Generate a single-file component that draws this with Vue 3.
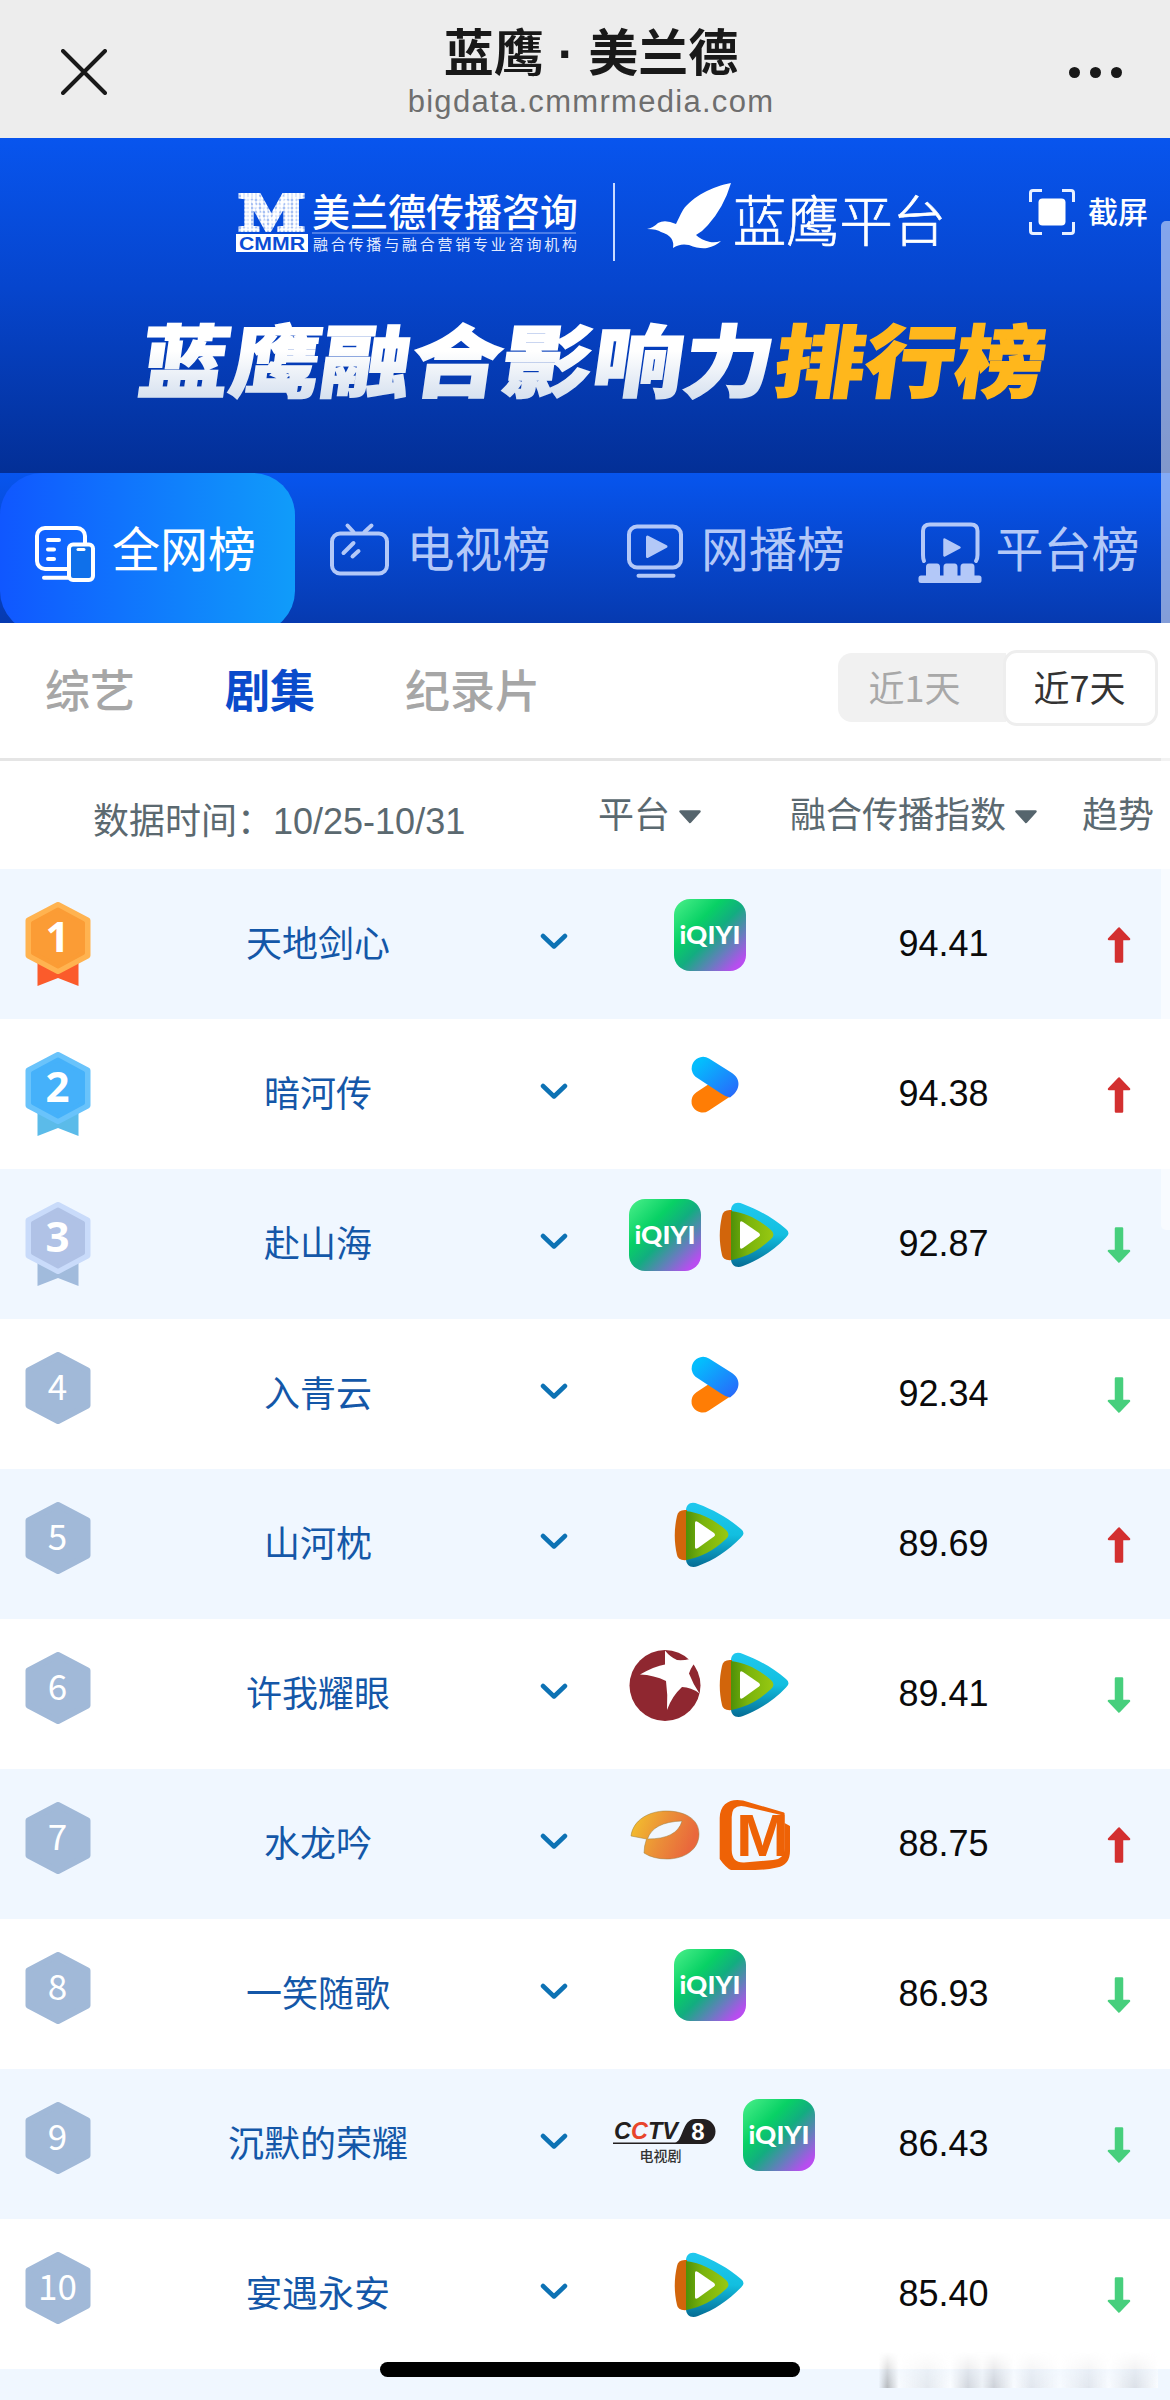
<template>
  <div class="page">

    <!-- Gradientes compartidos -->
    <svg class="sprites" width="0" height="0">
      <defs>
        <linearGradient id="gIqiyi" x1="0" y1="0" x2="1" y2="1">
          <stop offset="0" stop-color="#4cf08a" />
          <stop offset=".33" stop-color="#08d165" />
          <stop offset=".52" stop-color="#12ad80" />
          <stop offset=".73" stop-color="#6a7bc0" />
          <stop offset=".9" stop-color="#b84df0" />
        </linearGradient>
        <linearGradient id="gYouku" x1="0" y1="0" x2="1" y2="1">
          <stop offset=".15" stop-color="#04bdfd" />
          <stop offset="1" stop-color="#2b62fb" />
        </linearGradient>
        <linearGradient id="gCyan" x1="0" y1="0" x2="0" y2="1">
          <stop offset="0" stop-color="#20c8ee" />
          <stop offset=".5" stop-color="#12bfe0" />
          <stop offset="1" stop-color="#056c94" />
        </linearGradient>
        <linearGradient id="gGreen" x1="0" y1="0" x2="1" y2="0">
          <stop offset="0" stop-color="#4e9008" />
          <stop offset=".4" stop-color="#7ab40c" />
          <stop offset="1" stop-color="#98c812" />
        </linearGradient>
        <linearGradient id="gHunan" x1="0" y1="0" x2="1" y2=".3">
          <stop offset="0" stop-color="#f4c62c" />
          <stop offset=".55" stop-color="#eb8f38" />
          <stop offset="1" stop-color="#e9683c" />
        </linearGradient>
        <linearGradient id="gTitle" x1="0" y1="0" x2="0" y2="1">
          <stop offset=".45" stop-color="#ffffff" />
          <stop offset="1" stop-color="#c9d7ea" />
        </linearGradient>
        <pattern id="pDots" width="4" height="4" patternUnits="userSpaceOnUse">
          <rect width="4" height="4" fill="#fff" opacity=".5" />
          <circle cx="2" cy="2" r="1.9" fill="#fff" />
        </pattern>
      </defs>
    </svg>

    <!-- Barra superior -->
    <header class="topbar">
      <svg class="close" width="46" height="46" viewBox="0 0 46 46">
        <path d="M2 2 L44 44 M44 2 L2 44" stroke="#191919" stroke-width="4" stroke-linecap="round" />
      </svg>
      <div class="heading">
        <h1>蓝鹰<span> · </span>美兰德</h1>
        <p>bigdata.cmmrmedia.com</p>
      </div>
      <div class="more"><i></i><i></i><i></i></div>
    </header>

    <!-- Banner -->
    <section class="banner">
      <div class="brands">
        <svg class="cmmr" width="344" height="62" viewBox="0 0 344 62">
          <text x="4" y="38" class="m-dots" textLength="64" lengthAdjust="spacingAndGlyphs">M</text>
          <rect x="0" y="42" width="72" height="18" fill="#fff" />
          <text x="3" y="57.500" class="cmmr-name" textLength="66" lengthAdjust="spacingAndGlyphs">CMMR</text>
          <text x="76" y="34" class="cmmr-cn" textLength="266" lengthAdjust="spacingAndGlyphs">美兰德传播咨询</text>
          <rect x="76" y="40.500" width="264" height="1" fill="#8fb0f5" />
          <text x="77" y="58" class="cmmr-sub" textLength="264">融合传播与融合营销专业咨询机构</text>
        </svg>
        <span class="bar"></span>
        <svg class="eagle" width="84" height="66" viewBox="0 0 84 66">
          <path fill="#fff" d="M84 0 C66 3 45 14 36 27 C33 32 31 37 29 41 Q18 36 11 40 Q6 45 0 46 Q10 46 14 49 Q21 51 24 55 Q27 59 26 65 Q33 60 42 62 Q52 66 60 65 Q69 63 74 58 Q68 60 63 59 Q54 57 49 52 Q56 48 61 42 Q77 24 84 0Z" />
        </svg>
        <svg class="lanying" width="214" height="66" viewBox="0 0 214 66">
          <text x="0" y="51" textLength="213" lengthAdjust="spacingAndGlyphs">蓝鹰平台</text>
        </svg>
        <button class="shot">
          <svg width="46" height="46" viewBox="0 0 46 46">
            <path d="M1.500 13 V4 Q1.500 1.500 4 1.500 H13 M33 1.500 H42 Q44.500 1.500 44.500 4 V13 M44.500 33 V42 Q44.500 44.500 42 44.500 H33 M13 44.500 H4 Q1.500 44.500 1.500 42 V33" fill="none" stroke="#e8f0ff" stroke-width="3" />
            <rect x="9.500" y="9.500" width="27" height="27" rx="4" fill="#fff" />
          </svg>
          <span>截屏</span>
        </button>
      </div>
      <svg class="slogan" width="920" height="90" viewBox="0 0 920 90">
        <g transform="translate(13 0) skewX(-8)">
          <text x="0" y="73" class="slogan-a" textLength="635" lengthAdjust="spacingAndGlyphs">蓝鹰融合影响力</text>
          <text x="636" y="73" class="slogan-b" textLength="270" lengthAdjust="spacingAndGlyphs">排行榜</text>
        </g>
      </svg>
    </section>

    <!-- Pestañas -->
    <nav class="tabs">
      <a v-for="t in tabs" :key="t.id" class="tab" :class="{ active: t.id === tabActiva }" @click="tabActiva = t.id">
        <svg width="66" height="70" viewBox="0 0 66 70" fill="none" stroke="currentColor" stroke-width="4" stroke-linecap="round" stroke-linejoin="round">
          <template v-if="t.id === 'all'">
            <rect x="5" y="13" width="48" height="41" rx="8" />
            <path d="M16 25 H27 M16 34.500 H22 M16 44 H22 M12 62.700 H36" />
            <rect x="37" y="29.500" width="24" height="35.500" rx="4" fill="#0f70ea" />
            <path d="M46 34.500 H52" stroke-width="3" />
          </template>
          <template v-else-if="t.id === 'tv'">
            <rect x="5" y="18.500" width="55" height="40" rx="8" />
            <path d="M20.500 10.500 L26.500 17 M44.500 10.500 L37.500 17 M26.500 28 L16.500 38 M31.500 36 L25.500 41.500" />
          </template>
          <template v-else-if="t.id === 'web'">
            <rect x="8" y="11.500" width="52" height="41" rx="8" />
            <path d="M26.500 22 L45 31.500 L26.500 41.500Z" fill="currentColor" stroke-width="3" />
            <path d="M17.500 60.700 H52.500" />
          </template>
          <template v-else>
            <path d="M8 46 Q7 44 7 40 V16 Q7 9.500 14 9.500 H55 Q61.500 9.500 61.500 16 V40 Q61.500 44 60 46" />
            <path d="M28.500 24.500 L43.500 32.500 L28.500 40.500Z" fill="currentColor" stroke-width="2.500" />
            <path d="M10 62 V52 Q10 48.500 13 48.500 H21 Q24 48.500 24 52 V62Z M27.500 62 V52 Q27.500 48.500 30.500 48.500 H38.500 Q41.500 48.500 41.500 52 V62Z M44.500 62 V52 Q44.500 48.500 47.500 48.500 H55.500 Q58.500 48.500 58.500 52 V62Z" fill="currentColor" stroke="none" />
            <rect x="2.500" y="60.500" width="63" height="7.500" rx="2.500" fill="currentColor" stroke="none" />
          </template>
        </svg>
        <span>{{ t.label }}</span>
      </a>
    </nav>

    <!-- Categorías -->
    <div class="filters">
      <a v-for="c in categorias" :key="c" :class="{ active: c === categoria }" @click="categoria = c">{{ c }}</a>
      <div class="range">
        <button v-for="r in rangos" :key="r" :class="{ active: r === rango }" @click="rango = r">{{ r }}</button>
      </div>
    </div>

    <!-- Tabla -->
    <div class="thead">
      <span class="date">数据时间：<b>10/25-10/31</b></span>
      <span>平台<svg width="24" height="14" viewBox="0 0 24 14"><path d="M2.500 1.500 H21.500 L12 12Z" /></svg></span>
      <span>融合传播指数<svg width="24" height="14" viewBox="0 0 24 14"><path d="M2.500 1.500 H21.500 L12 12Z" /></svg></span>
      <span>趋势</span>
    </div>

    <div v-for="(d, i) in dramas" :key="d.nombre" class="row">
      <div class="rank">
        <svg width="66" height="86" viewBox="0 0 66 86">
          <path v-if="i < 3" d="M12.500 50 H53.500 V84 L33 76 L12.500 84Z" :fill="medallas[i].cinta" />
          <path d="M33 3 L62.500 18.500 V53.500 L33 69 L3.500 53.500 V18.500Z" :fill="i < 3 ? medallas[i].borde : '#a1b9d8'" :stroke="i < 3 ? medallas[i].borde : '#a1b9d8'" stroke-width="6" stroke-linejoin="round" />
          <path v-if="i < 3" d="M33 7.500 L58 21 V51 L33 64.500 L8 51 V21Z" :fill="medallas[i].fondo" :stroke="medallas[i].fondo" stroke-width="4" stroke-linejoin="round" />
          <text x="32.500" :y="i < 3 ? 50 : 48" :class="i < 3 ? 'n-top' : 'n'" text-anchor="middle">{{ i + 1 }}</text>
        </svg>
      </div>
      <div class="name">{{ d.nombre }}</div>
      <div class="chev">
        <svg width="28" height="18" viewBox="0 0 28 18">
          <path d="M3 4 L14 14.500 L25 4" fill="none" stroke="#0d72b4" stroke-width="4.500" stroke-linecap="round" stroke-linejoin="round" />
        </svg>
      </div>
      <div class="plats">
        <template v-for="p in d.plataformas" :key="p">
          <svg v-if="p === 'iqiyi'" width="72" height="72" viewBox="0 0 72 72">
            <rect width="72" height="72" rx="16" fill="url(#gIqiyi)" />
            <text x="5.500" y="45" textLength="61" lengthAdjust="spacingAndGlyphs" class="logo-iqiyi">iQIYI</text>
          </svg>
          <svg v-else-if="p === 'youku'" width="72" height="72" viewBox="0 0 72 72">
            <path d="M28.500 52.500 L52 37" stroke="#ff7d05" stroke-width="22" stroke-linecap="round" />
            <path d="M23 28.800 L47 44.500 Q52 48 56 48.500 C67 41 67 30 58 24 L35 9.600 A11.300 11.300 0 0 0 23 28.800Z" fill="url(#gYouku)" />
          </svg>
          <svg v-else-if="p === 'tencent'" width="72" height="72" viewBox="0 0 72 72">
            <path d="M12 12 C12 5 17 2 24 5 C40 11 54 19 67 30 Q72 34 67 38.500 C54 52 40 61 24 67 C17 70 12 66 12 60Z" fill="url(#gCyan)" />
            <path d="M13 11 Q4 10 3 17 C0 30 0 43 3 56 Q4 62 13 61Z" fill="#d2650b" />
            <path d="M12 12 C27 14 39 20 52 31 Q57 35.500 52 40 C39 52 27 58 12 61Z" fill="url(#gGreen)" />
            <path d="M21 24 Q21 21 24 23 L40 34 Q42 36 40 37.500 L24 49 Q21 51 21 48Z" fill="#fff" />
          </svg>
          <svg v-else-if="p === 'dragon'" width="72" height="72" viewBox="0 0 72 72">
            <circle cx="36" cy="36.500" r="35.500" fill="#8f2730" />
            <path d="M36 1.500 Q41 8 48 11 Q58 12 72 7 Q63 15 60 24.500 Q64 35 70.500 44.500 Q62 38 53 38 Q43 47 38 61 Q39 46 37 32 Q25 26 11 25.500 Q26 17 36 15.500Z" fill="#fff" />
          </svg>
          <svg v-else-if="p === 'hunan'" width="72" height="72" viewBox="0 0 72 72">
            <path fill-rule="evenodd" fill="url(#gHunan)" stroke="#9a7c3c" stroke-width=".5" d="M2 37 C4 21 20 12 37 12 C56 12 70 20 70 35 C70 51 55 60 38 60 Q24 60 15 54 Q15 47 17.500 40Z M18.500 40 Q24 23 53 22 Q48 40 18.500 40Z" />
          </svg>
          <svg v-else-if="p === 'mgtv'" width="72" height="72" viewBox="0 0 72 72">
            <path fill="#ee6206" d="M64 16.500 L26 7.500 Q13 5 12.700 18 V51 Q13 64 25 63.500 L54 61 Q65.500 60 65.500 49 V24 L71 27 V52 Q71 66 58 68.500 Q47 71 36 71 H12 Q7 69 0.700 60 V19 C1 4 12 -1 24 1.500 L65 13.500 Q67 16 64 16.500Z" />
            <text x="17" y="56.500" textLength="53" lengthAdjust="spacingAndGlyphs" class="logo-mg">M</text>
          </svg>
          <svg v-else width="120" height="72" viewBox="0 0 120 72">
            <path d="M8 43.500 H70 C78 43 77 20 90 20 H98 A12.400 12.400 0 0 1 98 45 H8Z" fill="#231f20" />
            <text x="9" y="40" class="logo-cctv" textLength="64" lengthAdjust="spacingAndGlyphs">C<tspan fill="#e8452c">C</tspan>TV</text>
            <text x="93" y="40.500" text-anchor="middle" class="logo-eight">8</text>
            <text x="34.500" y="62" class="logo-drama" textLength="42">电视剧</text>
          </svg>
        </template>
      </div>
      <div class="score">{{ d.indice }}</div>
      <div class="trend">
        <svg width="24" height="36" viewBox="0 0 24 36" :class="d.sube ? 'up' : 'down'">
          <path d="M12 1.500 L22 12 H15 V34.500 H9 V12 H2Z" fill="currentColor" stroke="currentColor" stroke-width="2.500" stroke-linejoin="round" />
        </svg>
      </div>
    </div>
    <div class="row"></div>

    <div class="scrollbar"></div>
    <div class="home"></div>
    <div class="smudge"></div>
  </div>
</template>

<script setup>
import { ref } from 'vue'

const tabActiva = ref('all')
const tabs = [
  { id: 'all', label: '全网榜' },
  { id: 'tv', label: '电视榜' },
  { id: 'web', label: '网播榜' },
  { id: 'plat', label: '平台榜' }
]

const categoria = ref('剧集')
const categorias = ['综艺', '剧集', '纪录片']

const rango = ref('近7天')
const rangos = ['近1天', '近7天']

const medallas = [
  { borde: '#ffb350', fondo: '#fb9c35', cinta: '#fb5b2b' },
  { borde: '#69c3fb', fondo: '#45b1fa', cinta: '#5bbbe9' },
  { borde: '#c9dbfa', fondo: '#b0c2e6', cinta: '#a1bbdc' }
]

const dramas = [
  { nombre: '天地剑心', plataformas: ['iqiyi'], indice: '94.41', sube: true },
  { nombre: '暗河传', plataformas: ['youku'], indice: '94.38', sube: true },
  { nombre: '赴山海', plataformas: ['iqiyi', 'tencent'], indice: '92.87', sube: false },
  { nombre: '入青云', plataformas: ['youku'], indice: '92.34', sube: false },
  { nombre: '山河枕', plataformas: ['tencent'], indice: '89.69', sube: true },
  { nombre: '许我耀眼', plataformas: ['dragon', 'tencent'], indice: '89.41', sube: false },
  { nombre: '水龙吟', plataformas: ['hunan', 'mgtv'], indice: '88.75', sube: true },
  { nombre: '一笑随歌', plataformas: ['iqiyi'], indice: '86.93', sube: false },
  { nombre: '沉默的荣耀', plataformas: ['cctv8', 'iqiyi'], indice: '86.43', sube: false },
  { nombre: '宴遇永安', plataformas: ['tencent'], indice: '85.40', sube: false }
]
</script>

<style>
body { background: #fff }
</style>

<style scoped>
.page    { position: relative; width: 1170px; height: 2400px; overflow: hidden; background: #fff; font-family: "Liberation Sans", "Noto Sans CJK SC", sans-serif }
.page *  { box-sizing: border-box }
.sprites { position: absolute }
button   { border: 0; padding: 0; background: none; font-family: inherit }

/* barra superior */
.topbar       { display: flex; align-items: center; justify-content: space-between; height: 138px; padding: 6px 48px 0 61px; background: #ededed }
.heading      { display: flex; flex-direction: column; align-items: center; margin: -6px 0 0 6px }
.heading h1   { margin: 0; font: 700 50px/60px "Noto Sans CJK SC", sans-serif; color: #191919; white-space: pre }
.heading span { font-family: "Liberation Sans", sans-serif }
.heading p    { margin: 0; font-size: 31px; line-height: 36px; letter-spacing: 1.3px; color: #6e6e6e }
.more         { display: flex; gap: 10px }
.more i       { width: 11px; height: 11px; border-radius: 50%; background: #191919 }

/* banner */
.banner  { height: 335px; background: linear-gradient(#0855ee, #0645cd 45%, #032f96) }
.brands  { display: flex; align-items: flex-start; padding: 45px 0 0 236px }
.cmmr    { margin-top: 9px }
.bar     { width: 2px; height: 78px; margin-left: 33px; background: #c9daff }
.eagle   { margin-left: 32px }
.lanying { margin: 7px 0 0 2px; font: 300 55px "Noto Sans CJK SC", sans-serif; fill: #fff; stroke: #fff; stroke-width: .7 }
.shot    { display: flex; align-items: center; gap: 13px; margin: 6px 0 0 82px; color: #fff; font: 500 30px/46px "Noto Sans CJK SC", sans-serif; white-space: nowrap }
.shot span { margin-top: -5px }
.m-dots    { font: bold 52px "Liberation Serif", serif; fill: url(#pDots); stroke: url(#pDots); stroke-width: 4 }
.cmmr-name { font: bold 19px "Liberation Sans", sans-serif; fill: #0a4cd6 }
.cmmr-cn   { font: 500 38px "Noto Sans CJK SC", sans-serif; fill: #fff }
.cmmr-sub  { font: 15px "Noto Sans CJK SC", sans-serif; fill: #e2ebff }
.slogan    { display: block; margin: 57px 0 0 133px; overflow: visible }
.slogan-a, .slogan-b { font: 900 79px "Noto Sans CJK SC", sans-serif; stroke-width: 1.5 }
.slogan-a  { fill: url(#gTitle); stroke: url(#gTitle) }
.slogan-b  { fill: #ffb71c; stroke: #ffb71c }

/* pestañas */
.tabs       { display: flex; height: 150px; overflow: hidden; background: linear-gradient(#0755ee, #063ab0) }
.tab        { display: flex; flex: none; align-items: center; gap: 14px; width: 294.500px; height: 154px; padding-left: 32px; font: 48px/70px "Noto Sans CJK SC", sans-serif; color: #b3c8f8; white-space: nowrap }
.tab span   { margin-top: -8px }
.tab.active { height: 160px; padding-bottom: 6px; border-radius: 42px; background: linear-gradient(90deg, #1057ff, #109cfa); color: #fff }

/* filtros */
.filters          { display: flex; align-items: center; gap: 90px; height: 138px; padding: 0 12px 3px 45px; border-bottom: 3px solid #e5e5e5; font: 500 45px/60px "Noto Sans CJK SC", sans-serif; color: #a6a6a6 }
.filters a.active { color: #0a4bcb; font-weight: 700 }
.range            { display: flex; align-items: center; margin: -3px 0 0 auto }
.range button     { width: 168px; height: 69px; border-radius: 14px 0 0 14px; background: #f1f1f1; font: 36px "Noto Sans CJK SC", sans-serif; color: #a8a8a8; padding: 0 15px 4px 0 }
.range .active    { width: 155px; height: 76px; margin-left: -3px; padding: 0 2px 4px 0; border: 3px solid #eee; border-radius: 14px; background: #fff; color: #333 }

/* tabla */
.thead          { display: grid; grid-template-columns: 505px 192px 292px auto; height: 108px; padding: 28px 0 0 93px; font-size: 36px; line-height: 54px; color: #5b6970; white-space: nowrap }
.date           { padding-top: 6px }
.date b         { font-weight: 400 }
.thead svg      { margin: 0 0 4px 8px; fill: #56656d; stroke: #56656d; stroke-width: 2.5; stroke-linejoin: round }
.row            { display: grid; grid-template-columns: 118px 400px 71px 241px 227px 113px; height: 150px }
.rank           { padding: 33px 0 0 25px }
.rank svg       { display: block }
.n              { font: 35px "Noto Sans CJK SC", sans-serif; fill: #fff }
.n-top          { font: 700 42px "Open Sans", sans-serif; fill: #fff }
.name           { align-self: center; padding-top: 2px; text-align: center; font-size: 36px; line-height: 50px; color: #1457a8 }
.chev           { padding: 63px 0 0 22px }
.chev svg       { display: block }
.plats          { display: flex; justify-content: center; gap: 18px; padding: 30px 0 0 1px }
.score          { text-align: center; font-size: 36px; line-height: 149px; color: #0a0a0a }
.trend          { padding: 58px 0 0 50px }
.trend svg      { display: block }
.up             { color: #d33030 }
.down           { color: #47cf7d; transform: rotate(180deg) }
.logo-iqiyi     { font: 900 25px Lato, sans-serif; fill: #fff }
.logo-mg        { font: bold 60px "Liberation Sans", sans-serif; fill: #ee6206 }
.logo-cctv      { font: italic bold 24px "Liberation Sans", sans-serif; fill: #231f20 }
.logo-eight     { font: bold 24px "Liberation Sans", sans-serif; fill: #fff }
.logo-drama     { font: 500 14px "Noto Sans CJK SC", sans-serif; fill: #333 }
.thead ~ .row:nth-child(odd)  { background: #f0f7ff }
.thead ~ .row:nth-child(even) { background: #fff }

/* capas superpuestas */
.scrollbar { position: absolute; top: 221px; right: 0; width: 9px; height: 1009px; border-radius: 5px 0 0 5px; background: rgba(255, 255, 255, .5) }
.home      { position: absolute; left: 380px; top: 2362px; width: 420px; height: 15px; border-radius: 8px; background: #000 }
.smudge    { position: absolute; left: 870px; top: 2352px; width: 288px; height: 36px; background: linear-gradient(90deg, transparent 3%, rgba(125, 125, 125, .5) 6%, rgba(255, 255, 255, .6) 10%, rgba(200, 200, 200, .3) 20%, rgba(255, 255, 255, .7) 28%, rgba(150, 150, 155, .35) 34%, rgba(230, 230, 230, .4) 39%, rgba(150, 150, 155, .4) 43%, rgba(255, 255, 255, .6) 50%, rgba(190, 190, 195, .3) 56%, rgba(255, 255, 255, .5) 66%, rgba(190, 190, 195, .3) 76%, rgba(255, 255, 255, .6) 83%, rgba(170, 170, 175, .3) 92%, rgba(255, 255, 255, .7)); -webkit-mask-image: linear-gradient(transparent, #000); mask-image: linear-gradient(transparent, #000) }
</style>
